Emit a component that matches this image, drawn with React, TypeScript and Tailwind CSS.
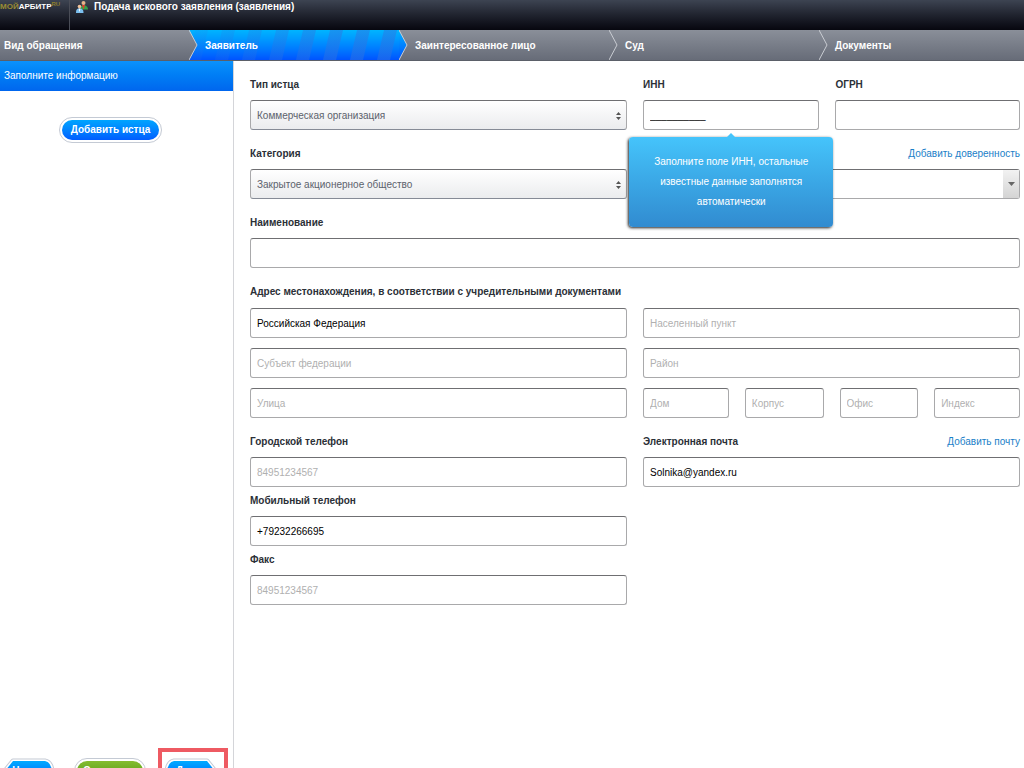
import { useId, type InputHTMLAttributes, type ReactNode } from 'react'
import clsx from 'clsx'

const fieldBase =
    'block h-[30px] w-full min-w-0 rounded-[3px] border border-[#a9a9ab] border-t-[#6f6f72] px-1.5 text-[10px]'

function TextField({ className, ...props }: InputHTMLAttributes<HTMLInputElement>) {
    return (
        <input
            type="text"
            className={clsx(fieldBase, 'bg-white text-black placeholder:text-[#b0b0b0]', className)}
            {...props}
        />
    )
}

function Label({ htmlFor, children }: { htmlFor?: string; children: ReactNode }) {
    return (
        <label htmlFor={htmlFor} className="block h-5 text-[10px] leading-5 font-bold text-[#2b3037]">
            {children}
        </label>
    )
}

interface FieldProps {
    label: string
    action?: string
    defaultValue?: string
    placeholder?: string
}

function Field({ label, action, ...input }: FieldProps) {
    const id = useId()
    return (
        <div className="flex flex-col gap-[5px]">
            <div className="flex items-center justify-between">
                <Label htmlFor={id}>{label}</Label>
                {action && <ActionLink>{action}</ActionLink>}
            </div>
            <TextField id={id} {...input} />
        </div>
    )
}

function ActionLink({ children }: { children: ReactNode }) {
    return (
        <a href="#" className="h-5 text-[10px] leading-5 text-[#1a80c8]">
            {children}
        </a>
    )
}

function SelectField({ label, value }: { label: string; value: string }) {
    const id = useId()
    return (
        <div className="flex flex-col gap-[5px]">
            <Label htmlFor={id}>{label}</Label>
            <div className="relative">
                <select
                    id={id}
                    className={clsx(
                        fieldBase,
                        'appearance-none border-b-[#868b96] bg-linear-to-b from-white to-[#ebecee] text-[#5c626c]'
                    )}
                >
                    <option>{value}</option>
                </select>
                <svg viewBox="0 0 5 8" className="pointer-events-none absolute top-3 right-1.5 h-2 w-[5px] fill-[#555]">
                    <path d="M2.5 0 5 3H0zM0 5h5L2.5 8z" />
                </svg>
            </div>
        </div>
    )
}

const steps = ['Вид обращения', 'Заявитель', 'Заинтересованное лицо', 'Суд', 'Документы']

function Steps() {
    return (
        <nav className="flex h-[31px] shrink-0 border-b border-[#5b6069] bg-linear-to-b from-[#8a8f99] to-[#676c78]">
            {steps.map((step, i) => {
                const active = i === 1
                const last = i === steps.length - 1
                return (
                    <a
                        key={step}
                        href="#"
                        className={clsx(
                            'relative flex h-[30px] items-center text-[10px] font-bold text-white',
                            i === 0 ? 'w-[189px] pl-1' : 'pl-4',
                            i > 0 && !last && 'w-[210px]',
                            last && 'flex-1',
                            active && 'bg-linear-to-b from-[#00b4ff] to-[#0052ff]'
                        )}
                    >
                        {active && <Stripes />}
                        <span className="relative">{step}</span>
                        {!last && <Chevron active={active} />}
                    </a>
                )
            })}
        </nav>
    )
}

function Stripes() {
    return (
        <svg viewBox="0 0 210 30" preserveAspectRatio="none" className="absolute inset-0 size-full">
            <defs>
                <linearGradient id="stripeFade" gradientUnits="userSpaceOnUse" x1="0" y1="0" x2="150" y2="0">
                    <stop offset="0" stopColor="#2f74e0" stopOpacity="0.1" />
                    <stop offset="1" stopColor="#2f74e0" stopOpacity="0.5" />
                </linearGradient>
            </defs>
            {[0, 27, 54, 81, 108, 135, 162, 189].map((x) => (
                <path key={x} d={`M${x + 6} 0h13l-7 30h-13z`} fill="url(#stripeFade)" />
            ))}
        </svg>
    )
}

function Chevron({ active }: { active: boolean }) {
    const id = useId()
    return (
        <svg viewBox="0 0 9 30" className="absolute top-0 left-full z-10 h-[30px] w-[9px]">
            <defs>
                <linearGradient id={id} x1="0" y1="0" x2="0" y2="1">
                    <stop offset="0" stopColor={active ? '#00b4ff' : '#8a8f99'} />
                    <stop offset="1" stopColor={active ? '#0052ff' : '#676c78'} />
                </linearGradient>
            </defs>
            <path d="M0 0 8 15 0 30z" fill={`url(#${id})`} />
            <path d="M0 0 8 15 0 30" fill="none" stroke="#c9ccd2" />
        </svg>
    )
}

function PeopleIcon() {
    return (
        <svg viewBox="0 0 12 12" className="h-3 w-3">
            <circle cx="7.5" cy="2" r="2" fill="#e8b48a" />
            <path d="M4.5 8.5c0-3 1-4.5 3-4.5s4.5 1.5 4.5 4.5z" fill="#35a04a" />
            <path d="m6 4 1.5 4.5L9 4z" fill="#e03a2a" />
            <circle cx="3.5" cy="5.5" r="1.8" fill="#f0c39b" />
            <path d="M0 12c0-3.5 1-4.5 3.5-4.5s4 1 4 4.5z" fill="#7cc0f0" />
            <path d="m2.5 7.500 1 3.500 1-3.500z" fill="#fff" />
        </svg>
    )
}

function Hint({ children }: { children: ReactNode }) {
    return (
        <div
            id="inn-hint"
            role="tooltip"
            className="absolute top-[37px] left-1/2 z-20 w-[204px] -translate-x-1/2 rounded-[4px] bg-linear-to-b from-[#45c4fb] to-[#318bd0] px-5 py-[15px] text-center text-[10px] leading-5 text-white shadow-[-1px_1px_3px_#222]"
        >
            <span className="absolute -top-1 left-1/2 size-0 -translate-x-1/2 border-x-4 border-b-4 border-x-transparent border-b-[#45c4fb]" />
            {children}
        </div>
    )
}

function ArrowButton({ shape, children }: { shape: string; children: string }) {
    const id = useId()
    return (
        <button type="button" className="relative h-[26px] w-[54px] text-[10px] font-bold text-white">
            <svg viewBox="0 0 54 26" className="absolute inset-0 size-full">
                <defs>
                    <linearGradient id={id} x1="0" y1="0" x2="0" y2="1">
                        <stop offset="0" stopColor="#00aaff" />
                        <stop offset="1" stopColor="#0060ff" />
                    </linearGradient>
                </defs>
                <path d={shape} fill="none" stroke="#c4cad4" strokeWidth="5" strokeLinejoin="round" />
                <path d={shape} fill="none" stroke="#fff" strokeWidth="3" strokeLinejoin="round" />
                <path d={shape} fill={`url(#${id})`} />
            </svg>
            <span className="relative">{children}</span>
        </button>
    )
}

function Sidebar() {
    return (
        <aside className="flex w-[234px] shrink-0 flex-col border-r border-[#d4d5d9]">
            <h2 className="h-[30px] bg-linear-to-b from-[#0c92fb] to-[#0066ee] pl-1 text-[10px] leading-[30px] text-white">
                Заполните информацию
            </h2>
            <div className="flex flex-1 items-start justify-center pt-[26px] pr-3">
                <button type="button" className="h-[26px] rounded-full border border-[#c4cad4] bg-white p-[2px]">
                    <span className="block h-5 rounded-full bg-linear-to-b from-[#00a4ff] to-[#005cff] px-[9px] text-[10px] leading-5 font-bold text-white">
                        Добавить истца
                    </span>
                </button>
            </div>
            <footer className="flex h-5 items-start overflow-hidden">
                <div className="pt-[9px]">
                    <ArrowButton shape="M13 3H45Q51 4 52 13 51 22 45 23H13L5 13z">Назад</ArrowButton>
                </div>
                <div className="ml-5 pt-[9px]">
                    <button type="button" className="h-[26px] w-[72px] rounded-full border border-[#c4cad4] bg-white p-[2px]">
                        <span className="block h-5 rounded-full bg-linear-to-b from-[#84bd2f] to-[#4f9412] text-[10px] leading-5 font-bold text-white">
                            Сохранить
                        </span>
                    </button>
                </div>
                <div className="ml-3 w-[70px] border-4 border-[#ee5a62] pt-[5px] pl-[2px]">
                    <ArrowButton shape="M43 3H10Q4 4 3 13 4 22 10 23H43L51 13z">Далее</ArrowButton>
                </div>
            </footer>
        </aside>
    )
}

function InnField() {
    return (
        <div className="flex flex-col gap-[5px]">
            <Label htmlFor="inn">ИНН</Label>
            <div className="relative">
                <TextField id="inn" defaultValue="__________" aria-describedby="inn-hint" />
                <Hint>Заполните поле ИНН, остальные известные данные заполнятся автоматически</Hint>
            </div>
        </div>
    )
}

function ProxyField() {
    return (
        <div className="flex flex-col gap-[5px]">
            <div className="flex justify-end">
                <ActionLink>Добавить доверенность</ActionLink>
            </div>
            <div className="relative">
                <select aria-label="Доверенность" className={clsx(fieldBase, 'appearance-none bg-white')}>
                    <option />
                </select>
                <span className="pointer-events-none absolute inset-y-px right-px flex w-4 items-center justify-center bg-linear-to-b from-[#f2f2f2] to-[#d4d4d4]">
                    <svg viewBox="0 0 7 4" className="h-1 w-[7px] fill-[#666]">
                        <path d="M0 0h7L3.5 4z" />
                    </svg>
                </span>
            </div>
        </div>
    )
}

export default function App() {
    return (
        <div className="flex h-screen flex-col overflow-hidden bg-white font-['Liberation_Sans',Arial,sans-serif]">
            <header className="flex h-[30px] shrink-0 items-start bg-linear-to-b from-[#3d4452] to-[#07070f]">
                <div className="flex h-full w-[70px] items-start border-r border-[#4a4d57] text-[8px] leading-[13px] font-bold">
                    <span className="text-[#9a8c34]">МОЙ</span>
                    <span className="text-white">АРБИТР</span>
                    <span className="text-[6px] leading-[9px] text-[#8d7f2c]">RU</span>
                </div>
                <div className="flex items-center gap-1.5 pl-1.5">
                    <PeopleIcon />
                    <h1 className="text-[10px] leading-[13px] font-bold text-white">Подача искового заявления (заявления)</h1>
                </div>
            </header>
            <Steps />
            <div className="flex min-h-0 flex-1">
                <Sidebar />
                <form className="flex min-w-0 flex-1 flex-col gap-3.5 pt-3.5 pr-1 pl-4">
                    <div className="grid grid-cols-2 gap-x-4 gap-y-3.5">
                        <SelectField label="Тип истца" value="Коммерческая организация" />
                        <div className="grid grid-cols-[22fr_23fr] gap-4">
                            <InnField />
                            <Field label="ОГРН" />
                        </div>
                        <SelectField label="Категория" value="Закрытое акционерное общество" />
                        <ProxyField />
                    </div>
                    <Field label="Наименование" />
                    <fieldset className="min-w-0">
                        <legend className="mb-1.5 h-5 text-[10px] leading-5 font-bold text-[#2b3037]">
                            Адрес местонахождения, в соответствии с учредительными документами
                        </legend>
                        <div className="grid grid-cols-2 gap-x-4 gap-y-2.5">
                            <TextField aria-label="Страна" defaultValue="Российская Федерация" />
                            <TextField aria-label="Населенный пункт" placeholder="Населенный пункт" />
                            <TextField aria-label="Субъект федерации" placeholder="Субъект федерации" />
                            <TextField aria-label="Район" placeholder="Район" />
                            <TextField aria-label="Улица" placeholder="Улица" />
                            <div className="grid grid-cols-[12fr_11fr_11fr_12fr] gap-4">
                                <TextField aria-label="Дом" placeholder="Дом" />
                                <TextField aria-label="Корпус" placeholder="Корпус" />
                                <TextField aria-label="Офис" placeholder="Офис" />
                                <TextField aria-label="Индекс" placeholder="Индекс" />
                            </div>
                        </div>
                    </fieldset>
                    <div className="grid grid-cols-2 items-start gap-4">
                        <div className="flex flex-col gap-1">
                            <Field label="Городской телефон" placeholder="84951234567" />
                            <Field label="Мобильный телефон" defaultValue="+79232266695" />
                            <Field label="Факс" placeholder="84951234567" />
                        </div>
                        <Field label="Электронная почта" action="Добавить почту" defaultValue="Solnika@yandex.ru" />
                    </div>
                </form>
            </div>
        </div>
    )
}
